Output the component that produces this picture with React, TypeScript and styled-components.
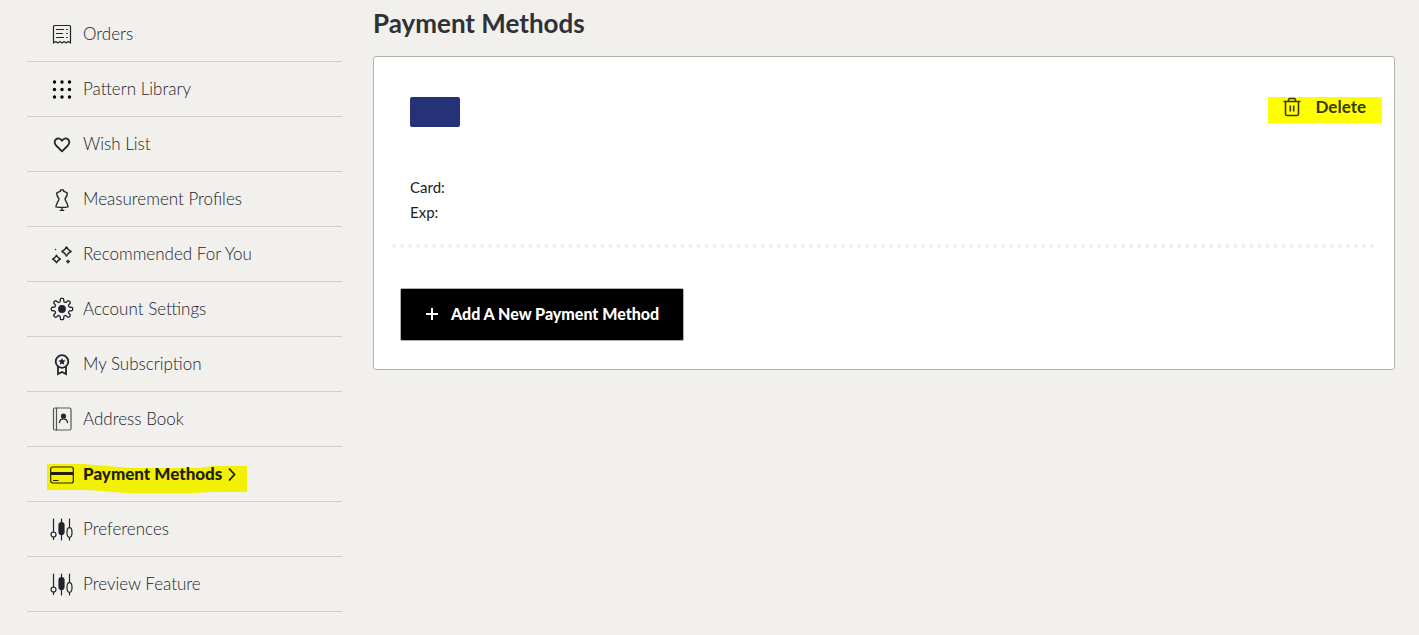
import React from "react";
import styled, { createGlobalStyle, css } from "styled-components";

const GlobalStyle = createGlobalStyle`
  *, *::before, *::after { box-sizing: border-box; }
  body {
    margin: 0;
    background: #f1f0ec;
    color: #2b2c36;
    font-family: Lato, "Open Sans", sans-serif;
  }
`;

const Page = styled.div`
  display: flex;
  align-items: flex-start;
  gap: 31px;
  min-height: 100vh;
  padding: 7px 24px 24px 27px;
`;

const Sidebar = styled.nav`
  flex: 0 0 315px;
`;

const NavList = styled.ul`
  margin: 0;
  padding: 0;
  list-style: none;
`;

const NavItem = styled.li`
  border-bottom: 1px solid #cfcecb;
`;

const NavLink = styled.a<{ $active?: boolean }>`
  position: relative;
  display: flex;
  align-items: center;
  height: 54px;
  padding-left: 23px;
  color: #22232c;
  font-size: 17px;
  font-weight: 300;
  line-height: 24px;
  text-decoration: none;
  ${(p) =>
    p.$active &&
    css`
      color: #1f2005;
      font-weight: 900;
    `}
`;

const NavIcon = styled.svg`
  position: relative;
  flex: none;
  width: 24px;
  height: 24px;
  margin-right: 9px;
  fill: none;
  stroke: currentColor;
  stroke-width: 1.2;
  stroke-linecap: round;
  stroke-linejoin: round;
`;

const NavText = styled.span`
  position: relative;
  padding-bottom: 1px;
`;

const Marker = styled.svg`
  position: absolute;
  left: 20px;
  top: 17px;
  width: 200px;
  height: 30px;
`;

const Chevron = styled.svg`
  position: relative;
  width: 8px;
  height: 14px;
  margin-left: 6px;
  fill: none;
  stroke: currentColor;
  stroke-width: 1.8;
`;

const Main = styled.main`
  flex: 1;
  min-width: 0;
`;

const Title = styled.h1`
  margin: 0 0 17px;
  color: #2f3038;
  font-size: 26px;
  font-weight: 700;
  line-height: 32px;
`;

const Panel = styled.section`
  padding: 40px 12px 28px 18px;
  border: 1px solid #b1b0a9;
  border-radius: 3px;
  background: #fff;
`;

const Method = styled.article`
  display: flex;
  align-items: flex-start;
  justify-content: space-between;
  padding-left: 18px;
`;

const CardBrand = styled.div`
  width: 50px;
  height: 30px;
  margin-bottom: 48px;
  border-radius: 2px;
  background: #263278;
`;

const Detail = styled.p`
  margin: 0;
  color: #1c1c1c;
  font-size: 15px;
  line-height: 25px;
`;

const DeleteButton = styled.button`
  display: flex;
  align-items: center;
  gap: 14px;
  height: 26px;
  padding: 0 16px 6px 14px;
  border: 0;
  background: #ff0;
  color: #38380c;
  font: 700 17px/20px Lato, "Open Sans", sans-serif;
  cursor: pointer;
`;

const TrashIcon = styled.svg`
  width: 20px;
  height: 20px;
  fill: none;
  stroke: currentColor;
  stroke-width: 1.6;
  stroke-linejoin: round;
`;

const Divider = styled.hr`
  margin: 19px 7px 40px 0;
  border: 0;
  border-top: 4px dotted #eeeeee;
`;

const AddButton = styled.button`
  display: flex;
  align-items: center;
  gap: 12px;
  height: 53px;
  margin-left: 8px;
  padding: 0 24px 2px 24px;
  border: 1px solid #b1b0a9;
  border-radius: 2px;
  background: #000;
  color: #fff;
  font: 900 16px/24px Lato, "Open Sans", sans-serif;
  cursor: pointer;
`;

const PlusIcon = styled.svg`
  width: 14px;
  height: 14px;
  fill: none;
  stroke: currentColor;
  stroke-width: 2;
`;

const gearOutline = (() => {
  const points: string[] = [];
  const steps = 160;
  for (let i = 0; i <= steps; i++) {
    const angle = (i / steps) * Math.PI * 2;
    const wave = Math.tanh(2.6 * Math.cos(8 * angle));
    const radius = 9 + 1.7 * wave;
    points.push(
      `${(12 + radius * Math.sin(angle)).toFixed(2)} ${(12 - radius * Math.cos(angle)).toFixed(2)}`
    );
  }
  return `M${points.join("L")}Z`;
})();

const sliders = (
  <g strokeWidth="1.2">
    <path d="M3.5 2v13M3.5 20v2.5M11.5 2v21M19.5 2v8M19.5 20.5v2.5" />
    <circle cx="3.5" cy="17.5" r="2.5" />
    <rect x="9" y="5.5" width="5" height="12" rx="2.5" fill="currentColor" />
    <ellipse cx="19.5" cy="15.5" rx="2.5" ry="4.8" />
  </g>
);

const icons = {
  orders: (
    <g>
      <path d="M3.5 21V4.5Q3.5 3.5 4.5 3.5H19.5Q20.5 3.5 20.5 4.5V21L18.3 19.5L16.2 21L14.1 19.5L12 21L9.9 19.5L7.8 21L5.7 19.5Z" />
      <path d="M6.5 7.5h7M6.5 11.5h6M6.5 15.5h7M16.5 7.5h.8M16.5 11.5h.8M16.5 15.5h.8" />
    </g>
  ),
  pattern: (
    <g fill="#000" stroke="none">
      {[5, 12.5, 20].map((y) =>
        [4.5, 12, 19.5].map((x) => <circle key={`${x}-${y}`} cx={x} cy={y} r="1.7" />)
      )}
    </g>
  ),
  wish: (
    <path
      d="M12 19.4L6.1 13.5C4.1 11.4 4.3 8.6 6.1 7.2C8 5.8 10.6 6.3 12 8.7C13.4 6.3 16 5.8 17.9 7.2C19.7 8.6 19.9 11.4 17.9 13.5Z"
      strokeWidth="1.8"
    />
  ),
  measure: (
    <g strokeWidth="1.3">
      <path d="M10.5 2.8h3v1.4l3.7 1.7c.5 2.5-.7 4-2.2 5.9c.4 2.600 2.700 4 3.100 8c-3.600.7-8.600.7-12.200 0c.4-4 2.700-5.400 3.100-8c-1.500-1.900-2.700-3.400-2.200-5.900l3.700-1.700Z" />
      <path d="M12 20.6v2.7M10.2 23.3h3.6" />
    </g>
  ),
  recommended: (
    <g strokeWidth="1.4">
      <path d="M16.5 4.9Q17.9 8.1 21.1 9.5Q17.9 10.9 16.5 14.1Q15.1 10.9 11.9 9.5Q15.1 8.1 16.5 4.9Z" />
      <path d="M6.5 13.2Q7.7 15.8 10.3 17Q7.7 18.2 6.5 20.8Q5.3 18.2 2.7 17Q5.3 15.8 6.5 13.2Z" />
      <path d="M18 18.1v2.8M16.6 19.5h2.8M5.5 7.5h.1" />
    </g>
  ),
  settings: (
    <g>
      <path d={gearOutline} strokeWidth="1.3" />
      <circle cx="12" cy="12" r="3.9" fill="currentColor" stroke="none" />
    </g>
  ),
  subscription: (
    <g strokeWidth="1.8" strokeLinejoin="miter">
      <circle cx="12" cy="9.5" r="6.3" />
      <path d="M8 15v7l4-2l4 2V15" />
      <path
        d="M12 6l1.1 2.300l2.500.3l-1.900 1.700l.5 2.500L12 11.600l-2.200 1.200l.5-2.500l-1.900-1.700l2.500-.3Z"
        fill="currentColor"
        stroke="none"
      />
    </g>
  ),
  address: (
    <g stroke="#55565c">
      <rect x="3.5" y="1" width="17.5" height="22" rx="1.5" />
      <path d="M6.5 1v22" />
      <circle cx="13.5" cy="9" r="2.6" fill="#24252d" stroke="none" />
      <path d="M9.5 15.5c.3-2.6 1.8-3.7 4-3.7s3.7 1.1 4 3.7" stroke="#24252d" strokeWidth="1.3" />
    </g>
  ),
  payment: (
    <g>
      <rect x=".7" y="5" width="22.6" height="16" rx="2" />
      <path d="M1 11.5h22" strokeWidth="3" strokeLinecap="butt" />
      <path d="M3.5 18.5h4.5" />
    </g>
  ),
  preferences: sliders,
  preview: sliders,
};

const navItems: { label: string; icon: keyof typeof icons; active?: boolean }[] = [
  { label: "Orders", icon: "orders" },
  { label: "Pattern Library", icon: "pattern" },
  { label: "Wish List", icon: "wish" },
  { label: "Measurement Profiles", icon: "measure" },
  { label: "Recommended For You", icon: "recommended" },
  { label: "Account Settings", icon: "settings" },
  { label: "My Subscription", icon: "subscription" },
  { label: "Address Book", icon: "address" },
  { label: "Payment Methods", icon: "payment", active: true },
  { label: "Preferences", icon: "preferences" },
  { label: "Preview Feature", icon: "preview" },
];

export default function App() {
  return (
    <>
      <GlobalStyle />
      <Page>
        <Sidebar aria-label="Account">
          <NavList>
            {navItems.map(({ label, icon, active }) => (
              <NavItem key={label}>
                <NavLink href="#" $active={active} aria-current={active ? "page" : undefined}>
                  {active && (
                    <Marker viewBox="0 0 200 30" aria-hidden="true">
                      <path
                        d="M0 0H36L60 2L84 4H152L166 2H200V28H165L138 29.5H88L66 28L41 26H0Z"
                        fill="#f1f005"
                      />
                    </Marker>
                  )}
                  <NavIcon viewBox="0 0 24 24" aria-hidden="true">
                    {icons[icon]}
                  </NavIcon>
                  <NavText>{label}</NavText>
                  {active && (
                    <Chevron viewBox="0 0 8 14" aria-hidden="true">
                      <path d="M1 1.5l5.5 6L1 13.5" />
                    </Chevron>
                  )}
                </NavLink>
              </NavItem>
            ))}
          </NavList>
        </Sidebar>
        <Main>
          <Title>Payment Methods</Title>
          <Panel>
            <Method>
              <div>
                <CardBrand />
                <Detail>Card:</Detail>
                <Detail>Exp:</Detail>
              </div>
              <DeleteButton type="button">
                <TrashIcon viewBox="0 0 20 20" aria-hidden="true">
                  <path d="M1.5 4.5h17M6.5 4.5V3q0-1.5 1.5-1.5h4q1.5 0 1.5 1.5v1.5M3.5 4.5V17q0 1.5 1.5 1.5h10q1.5 0 1.5-1.5V4.5M8.3 8.5v6M11.7 8.5v6" />
                </TrashIcon>
                Delete
              </DeleteButton>
            </Method>
            <Divider />
            <AddButton type="button">
              <PlusIcon viewBox="0 0 14 14" aria-hidden="true">
                <path d="M7 1v12M1 7h12" />
              </PlusIcon>
              Add A New Payment Method
            </AddButton>
          </Panel>
        </Main>
      </Page>
    </>
  );
}
